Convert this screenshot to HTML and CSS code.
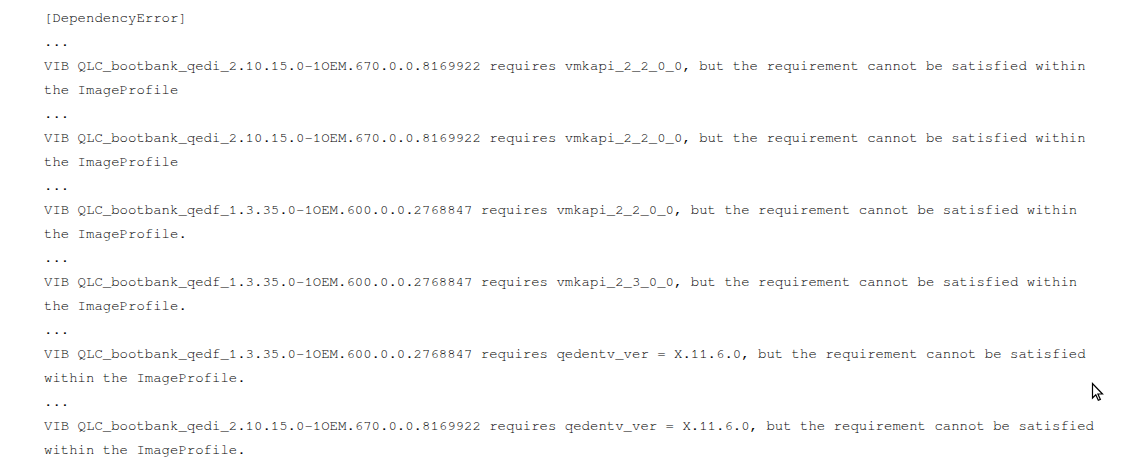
FILE: index.html
```html
<!DOCTYPE html>
<html>
<head>
<meta charset="utf-8">
<link rel="stylesheet" href="styles.css">
</head>
<body>
<div class="log">
<div class="line">[DependencyError]</div>
<div class="line">...</div>
<div class="line">VIB QLC_bootbank_qedi_2.10.15.0-1OEM.670.0.0.8169922 requires vmkapi_2_2_0_0, but the requirement cannot be satisfied within</div>
<div class="line">the ImageProfile</div>
<div class="line">...</div>
<div class="line">VIB QLC_bootbank_qedi_2.10.15.0-1OEM.670.0.0.8169922 requires vmkapi_2_2_0_0, but the requirement cannot be satisfied within</div>
<div class="line">the ImageProfile</div>
<div class="line">...</div>
<div class="line">VIB QLC_bootbank_qedf_1.3.35.0-1OEM.600.0.0.2768847 requires vmkapi_2_2_0_0, but the requirement cannot be satisfied within</div>
<div class="line">the ImageProfile.</div>
<div class="line">...</div>
<div class="line">VIB QLC_bootbank_qedf_1.3.35.0-1OEM.600.0.0.2768847 requires vmkapi_2_3_0_0, but the requirement cannot be satisfied within</div>
<div class="line">the ImageProfile.</div>
<div class="line">...</div>
<div class="line">VIB QLC_bootbank_qedf_1.3.35.0-1OEM.600.0.0.2768847 requires qedentv_ver = X.11.6.0, but the requirement cannot be satisfied</div>
<div class="line">within the ImageProfile.</div>
<div class="line">...</div>
<div class="line">VIB QLC_bootbank_qedi_2.10.15.0-1OEM.670.0.0.8169922 requires qedentv_ver = X.11.6.0, but the requirement cannot be satisfied</div>
<div class="line">within the ImageProfile.</div>
</div>
<svg class="cursor" width="14" height="20" viewBox="0 0 14 20">
<path d="M1.5 1.5 L1.5 16 L4.8 12.8 L7.3 18.3 L9.4 17.4 L6.9 12 L11.5 12 Z" fill="#fff" stroke="#000" stroke-width="1.2" stroke-linejoin="miter"/>
</svg>
</body>
</html>
```

FILE: styles.css
```css
html, body {
  margin: 0;
  padding: 0;
  background: #ffffff;
}
body {
  position: relative;
  width: 1130px;
  height: 474px;
  overflow: hidden;
}
.log {
  padding: 6px 0 0 44px;
  font-family: "Nimbus Mono PS", "Nimbus Mono L", "FreeMono", "Courier", "Liberation Mono", monospace;
  font-size: 14px;
  line-height: 24px;
  color: #000000;
}
.line {
  white-space: pre;
}
.cursor {
  position: absolute;
  left: 1091px;
  top: 382px;
}
```
